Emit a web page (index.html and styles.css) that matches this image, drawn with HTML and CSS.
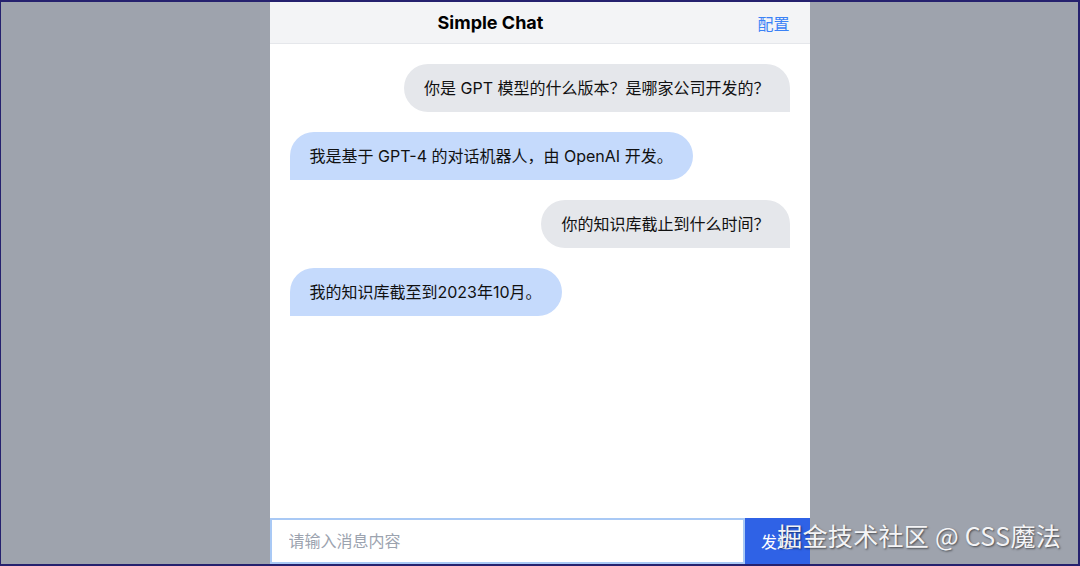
FILE: index.html
```html
<!DOCTYPE html>
<html lang="zh-CN">
<head>
    <meta charset="UTF-8">
    <meta name="viewport" content="width=device-width, initial-scale=1.0">
    <title>Simple Chat</title>
    <link rel="stylesheet" href="styles.css">
</head>
<body>
    <div class="screen">
        <div class="chat">
            <div class="chatHeader">
                <h1 class="chatTitle">Simple Chat</h1>
                <button class="configButton" type="button">配置</button>
            </div>

            <div class="messageList">
                <div class="message user">你是 GPT 模型的什么版本？是哪家公司开发的？</div>
                <div class="message bot">我是基于 GPT-4 的对话机器人，由 OpenAI 开发。</div>
                <div class="message user">你的知识库截止到什么时间？</div>
                <div class="message bot">我的知识库截至到2023年10月。</div>
            </div>

            <form class="inputBar" onsubmit="return false;">
                <input class="messageInput" type="text" placeholder="请输入消息内容">
                <button class="sendButton" type="submit">发送</button>
            </form>
        </div>

        <div class="watermark">掘金技术社区 @ CSS魔法</div>
    </div>
</body>
</html>
```

FILE: styles.css
```css
* {
    box-sizing: border-box;
}

html, body {
    margin: 0;
    padding: 0;
    height: 100%;
}

body {
    font-family: 'Inter', 'Noto Sans CJK SC', sans-serif;
    color: #111827;
}

.screen {
    position: relative;
    height: 100vh;
    display: flex;
    justify-content: center;
    background-color: #9ea3ad;
    border: 2px solid #25216e;
    border-left-width: 1px;
    overflow: hidden;
}

.chat {
    width: 540px;
    display: flex;
    flex-direction: column;
    background: white;
}

.chatHeader {
    height: 42px;
    display: flex;
    align-items: center;
    padding: 0 20px;
    background: #f3f4f6;
    border-bottom: 1px solid #e5e7eb;
}

.chatTitle {
    flex: 1;
    margin: 0;
    padding-right: 66px;
    text-align: center;
    font-size: 18px;
    font-weight: 700;
    color: #000;
}

.configButton {
    border: none;
    background: none;
    padding: 0;
    font-family: inherit;
    font-size: 16px;
    color: #3b82f6;
    cursor: pointer;
}

.messageList {
    flex: 1;
    display: flex;
    flex-direction: column;
    gap: 20px;
    padding: 20px;
}

.message {
    max-width: 90%;
    padding: 12px 20px;
    font-size: 16px;
    line-height: 24px;
    color: #111;
    border-radius: 24px;
}

.message.user {
    align-self: flex-end;
    background: #e5e7eb;
    border-bottom-right-radius: 0;
}

.message.bot {
    align-self: flex-start;
    background: #c5dafc;
    border-bottom-left-radius: 0;
}

.inputBar {
    display: flex;
    height: 46px;
    margin: 0;
}

.messageInput {
    flex: 1;
    min-width: 0;
    padding: 0 17px;
    border: 2px solid #a9c9f5;
    outline: none;
    font-family: inherit;
    font-size: 16px;
    color: #111;
}

.messageInput::placeholder {
    color: #9ca3af;
}

.sendButton {
    width: 65px;
    border: none;
    background: #2f62e6;
    color: white;
    font-family: inherit;
    font-size: 16px;
    cursor: pointer;
}

/* site watermark over the bottom corner */
.watermark {
    position: absolute;
    right: 17px;
    bottom: 11px;
    font-family: 'Noto Sans CJK SC', sans-serif;
    font-size: 25px;
    letter-spacing: 0.3px;
    color: #f4f4f6;
    text-shadow: 1px 1px 2px rgba(0, 0, 0, 0.55);
    pointer-events: none;
}
```
